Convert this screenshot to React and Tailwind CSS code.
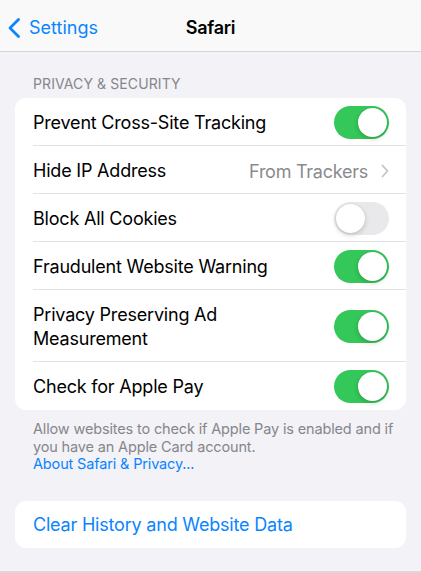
import React from "react";

const font = { fontFamily: "Inter, 'Noto Sans', sans-serif" };

function Toggle({ on }) {
  return (
    <div
      className={
        "relative h-[33px] w-[55px] shrink-0 rounded-full " +
        (on ? "bg-[#34c759]" : "bg-[#e9e9eb]")
      }
    >
      <div
        className={
          "absolute top-[2px] h-[29px] w-[29px] rounded-full bg-white shadow-[0_2px_5px_rgba(0,0,0,0.18),0_0_1px_rgba(0,0,0,0.12)] " +
          (on ? "right-[2px]" : "left-[2px]")
        }
      />
    </div>
  );
}

function Row({ children, right, last, tall }) {
  return (
    <div className="relative flex items-center pl-[18px] pr-[17px]">
      <div
        className={
          "flex w-full items-center justify-between " +
          (tall ? "h-[72px]" : "h-[48px]")
        }
      >
        {children}
        {right}
      </div>
      {!last && (
        <div className="absolute bottom-0 left-[18px] right-0 h-px bg-[#e3e3e6]" />
      )}
    </div>
  );
}

function Label({ children }) {
  return (
    <div className="pt-[2px] text-[18px] leading-[24px] tracking-[-0.2px] text-black">
      {children}
    </div>
  );
}

export default function App() {
  return (
    <div
      className="flex h-[573px] w-[421px] flex-col overflow-hidden border-b-2 border-[#d9d9dd] bg-[#f2f2f7]"
      style={font}
    >
      {/* navigation bar */}
      <div className="relative flex h-[52px] shrink-0 items-center border-b border-[#d4d4d8] bg-[#f9f9f9] pt-[4px]">
        <div className="flex items-center pl-[7px] text-[#0a84ff]">
          <svg width="14" height="22" viewBox="0 0 14 22" fill="none">
            <path
              d="M11.5 2.5L3 11l8.5 8.5"
              stroke="currentColor"
              strokeWidth="2.8"
              strokeLinecap="round"
              strokeLinejoin="round"
            />
          </svg>
          <span className="ml-[8px] text-[18px] tracking-[0px]">Settings</span>
        </div>
        <div className="absolute left-0 right-0 text-center text-[18px] font-semibold tracking-[-0.3px] text-black">
          Safari
        </div>
      </div>

      {/* privacy section */}
      <div className="px-[15px] pt-[23px]">
        <div className="pl-[18px] text-[14px] leading-[18px] tracking-[0.1px] text-[#86868b]">
          PRIVACY &amp; SECURITY
        </div>
        <div className="mt-[5px] overflow-hidden rounded-[11px] bg-white">
          <Row right={<Toggle on />}>
            <Label>Prevent Cross-Site Tracking</Label>
          </Row>
          <Row
            right={
              <div className="flex items-center gap-[13px] pt-[2px] text-[#8a8a8e]">
                <span className="text-[18px] tracking-[-0.25px]">From Trackers</span>
                <svg width="8" height="14" viewBox="0 0 8 14" fill="none">
                  <path
                    d="M1.5 1.5L6.5 7l-5 5.5"
                    stroke="#c4c4c7"
                    strokeWidth="1.8"
                    strokeLinecap="round"
                    strokeLinejoin="round"
                  />
                </svg>
              </div>
            }
          >
            <Label>Hide IP Address</Label>
          </Row>
          <Row right={<Toggle on={false} />}>
            <Label>Block All Cookies</Label>
          </Row>
          <Row right={<Toggle on />}>
            <Label>Fraudulent Website Warning</Label>
          </Row>
          <Row tall right={<Toggle on />}>
            <Label>
              Privacy Preserving Ad
              <br />
              Measurement
            </Label>
          </Row>
          <Row last right={<Toggle on />}>
            <Label>Check for Apple Pay</Label>
          </Row>
        </div>
        <div className="pl-[18px] pr-[4px] pt-[10px] text-[14.5px] leading-[17.5px] tracking-[-0.15px] text-[#86868b]">
          Allow websites to check if Apple Pay is enabled and if you have an Apple Card account.
          <div className="text-[#0a84ff]">About Safari &amp; Privacy...</div>
        </div>
      </div>

      {/* history section */}
      <div className="px-[15px] pt-[28px]">
        <div className="flex h-[47px] items-center rounded-[11px] bg-white pl-[18px] pt-[1px] text-[18px] tracking-[-0.2px] text-[#0a84ff]">
          Clear History and Website Data
        </div>
      </div>
    </div>
  );
}
